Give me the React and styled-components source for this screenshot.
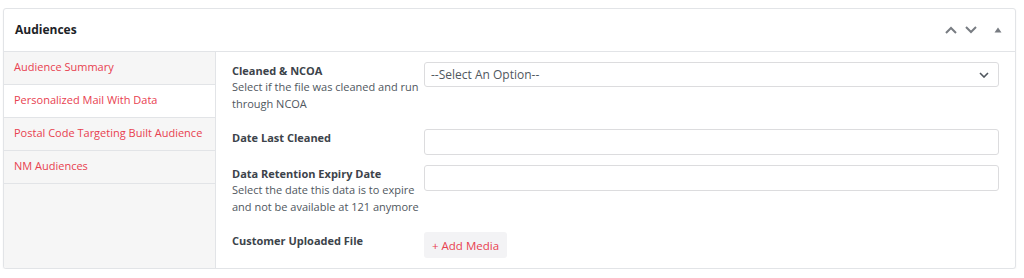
import React from 'react'
import styled, { createGlobalStyle } from 'styled-components'

const GlobalStyle = createGlobalStyle`
  body {
    margin: 0;
    background: #ffffff;
    font-family: 'Open Sans', 'Noto Sans', sans-serif;
    color: #3c434a;
  }
`

const tabs = [
  { label: 'Audience Summary' },
  { label: 'Personalized Mail With Data', active: true },
  { label: 'Postal Code Targeting Built Audience' },
  { label: 'NM Audiences' },
]

const App = () => {
  return (
    <>
      <GlobalStyle />
      <Panel>
        <Header>
          <Title>Audiences</Title>
          <Actions>
            <IconButton aria-label='Move up'>
              <svg width='14' height='10' viewBox='0 0 14 10'>
                <path d='M2 8 L7 3 L12 8' fill='none' stroke='#787c82' strokeWidth='2' />
              </svg>
            </IconButton>
            <IconButton aria-label='Move down'>
              <svg width='14' height='10' viewBox='0 0 14 10'>
                <path d='M2 2 L7 7 L12 2' fill='none' stroke='#787c82' strokeWidth='2' />
              </svg>
            </IconButton>
            <IconButton aria-label='Toggle panel' $wide>
              <svg width='8' height='6' viewBox='0 0 8 6'>
                <path d='M0.5 5.5 L4 0.5 L7.5 5.5 Z' fill='#787c82' />
              </svg>
            </IconButton>
          </Actions>
        </Header>
        <Body>
          <Sidebar>
            {tabs.map((t) => (
              <Tab key={t.label} $active={t.active}>
                {t.label}
              </Tab>
            ))}
          </Sidebar>
          <Content>
            <Row $described>
              <LabelCol>
                <Label>Cleaned &amp; NCOA</Label>
                <Help>Select if the file was cleaned and run through NCOA</Help>
              </LabelCol>
              <SelectBox>
                <span>--Select An Option--</span>
                <svg width='10' height='6' viewBox='0 0 10 6'>
                  <path d='M1 1 L5 5 L9 1' fill='none' stroke='#50575e' strokeWidth='1.6' />
                </svg>
              </SelectBox>
            </Row>
            <Row>
              <LabelCol>
                <Label>Date Last Cleaned</Label>
              </LabelCol>
              <Input />
            </Row>
            <Row $described>
              <LabelCol>
                <Label>Data Retention Expiry Date</Label>
                <Help>Select the date this data is to expire and not be available at 121 anymore</Help>
              </LabelCol>
              <Input />
            </Row>
            <Row>
              <LabelCol>
                <Label>Customer Uploaded File</Label>
              </LabelCol>
              <div>
                <MediaButton>+ Add Media</MediaButton>
              </div>
            </Row>
          </Content>
        </Body>
      </Panel>
    </>
  )
}

export default App

const Panel = styled.div`
  margin: 8px 0 0 3px;
  width: 1011px;
  border: 1px solid #e2e4e7;
  border-radius: 3px;
  box-shadow: 0 1px 2px rgba(0, 0, 0, 0.05);
  background: #fff;
  overflow: hidden;
`

const Header = styled.div`
  height: 42px;
  display: flex;
  align-items: center;
  justify-content: space-between;
  padding: 0 10px 0 11px;
  border-bottom: 1px solid #e2e4e7;
`

const Title = styled.h2`
  margin: 0 0 1px;
  font-size: 12px;
  font-weight: 700;
  color: #1d2327;
`

const Actions = styled.div`
  display: flex;
  align-items: center;
  gap: 6px;
  margin-bottom: 1px;
`

const IconButton = styled.span`
  display: flex;
  align-items: center;
  justify-content: center;
  width: 14px;
  height: 14px;
  margin-left: ${(p) => (p.$wide ? '7px' : '0')};
`

const Body = styled.div`
  display: grid;
  grid-template-columns: 212px 1fr;
`

const Sidebar = styled.div`
  background: #f6f6f6;
  border-right: 1px solid #e2e4e7;
`

const Tab = styled.div`
  height: 33px;
  box-sizing: border-box;
  display: flex;
  align-items: center;
  padding: 0 10px 3px;
  border-bottom: 1px solid #e2e4e7;
  background: ${(p) => (p.$active ? '#ffffff' : '#f6f6f6')};
  color: #e8414f;
  font-size: 11px;
  white-space: nowrap;
`

const Content = styled.div`
  padding: 10px 16px;
  display: flex;
  flex-direction: column;
  gap: 10px;
`

const Row = styled.div`
  display: grid;
  grid-template-columns: 192px 1fr;
  align-items: start;
  padding-bottom: ${(p) => (p.$described ? '7px' : '0')};
`

const LabelCol = styled.div`
  padding-top: 0;
`

const Label = styled.div`
  font-size: 11px;
  font-weight: 700;
  line-height: 17px;
  color: #3c434a;
`

const Help = styled.div`
  font-size: 11px;
  line-height: 16.5px;
  color: #50575e;
  padding-right: 4px;
`

const SelectBox = styled.div`
  height: 25px;
  box-sizing: border-box;
  border: 1px solid #dcdcde;
  border-radius: 3px;
  display: flex;
  align-items: center;
  justify-content: space-between;
  padding: 0 9px 0 6px;
  font-size: 12px;
  color: #50575e;
`

const Input = styled.div`
  height: 26px;
  box-sizing: border-box;
  border: 1px solid #dcdcde;
  border-radius: 3px;
  background: #fff;
`

const MediaButton = styled.button`
  height: 26px;
  padding: 0 8px;
  border: none;
  border-radius: 3px;
  background: #f3f3f5;
  color: #e8414f;
  font-family: 'Open Sans', 'Noto Sans', sans-serif;
  font-size: 11.5px;
  cursor: pointer;
`
